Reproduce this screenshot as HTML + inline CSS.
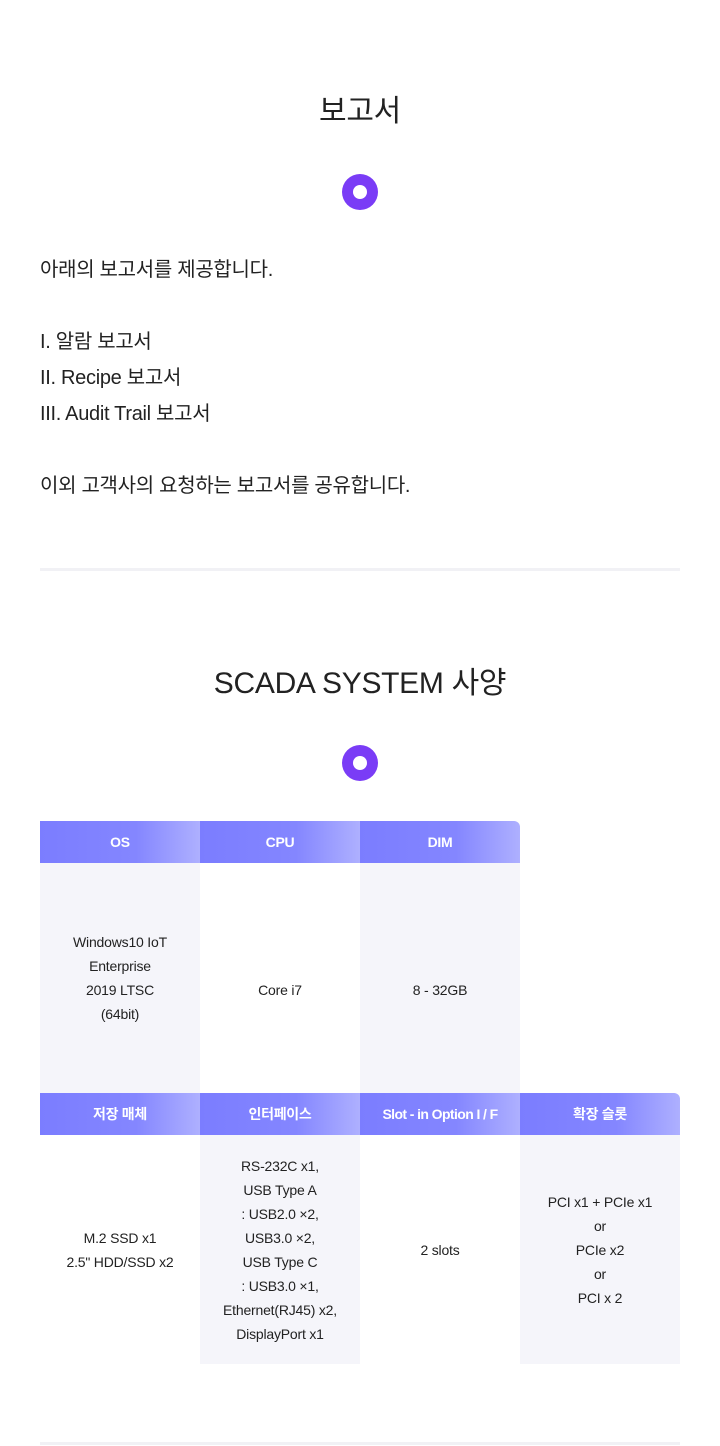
<!DOCTYPE html>
<html><head><meta charset="utf-8"><style>
*{margin:0;padding:0;box-sizing:border-box}
body{width:720px;height:1446px;background:#fff;font-family:"Liberation Sans","Noto Sans CJK KR",sans-serif;color:#222;position:relative;overflow:hidden}
.t{position:absolute;left:0;width:720px;text-align:center;font-size:30px;color:#222;letter-spacing:-0.3px}
.dot{position:absolute;left:342px;width:36px;height:36px;border-radius:50%;background:#7a3cf6}
.dot:after{content:"";position:absolute;left:11px;top:11px;width:14px;height:14px;border-radius:50%;background:#fff}
.p{position:absolute;left:40px;font-size:20px;line-height:36px;color:#222;letter-spacing:-0.3px}
.hr{position:absolute;left:40px;width:640px;height:3px;background:#f1f1f5}
.h,.c{position:absolute;width:160px;display:flex;align-items:center;justify-content:center;text-align:center}
.h{height:42px;color:#fff;font-size:14px;font-weight:bold;letter-spacing:-0.3px;background:linear-gradient(90deg,#7b7dff 0%,#8486ff 60%,#aeb0ff 100%)}
.c{font-size:14px;line-height:24px;color:#222;letter-spacing:-0.2px}
.g{background:#f5f5fa}
</style></head><body>
<div class="t" style="top:86px">보고서</div>
<div class="dot" style="top:174px"></div>
<div class="p" style="top:252px">아래의 보고서를 제공합니다.<br><br>I. 알람 보고서<br>II. Recipe 보고서<br>III. Audit Trail 보고서<br><br>이외 고객사의 요청하는 보고서를 공유합니다.</div>
<div class="hr" style="top:568px"></div>
<div class="t" style="top:658px">SCADA SYSTEM 사양</div>
<div class="dot" style="top:745px"></div>

<div class="h" style="left:40px;top:821px">OS</div>
<div class="h" style="left:200px;top:821px">CPU</div>
<div class="h" style="left:360px;top:821px;border-top-right-radius:6px">DIM</div>
<div class="c g" style="left:40px;top:863px;height:230px">Windows10 IoT<br>Enterprise<br>2019 LTSC<br>(64bit)</div>
<div class="c" style="left:200px;top:863px;height:230px;padding-top:24px">Core i7</div>
<div class="c g" style="left:360px;top:863px;height:230px;padding-top:24px">8 - 32GB</div>

<div class="h" style="left:40px;top:1093px">저장 매체</div>
<div class="h" style="left:200px;top:1093px">인터페이스</div>
<div class="h" style="left:360px;top:1093px;letter-spacing:-0.6px">Slot - in Option I / F</div>
<div class="h" style="left:520px;top:1093px;border-top-right-radius:6px">확장 슬롯</div>
<div class="c" style="left:40px;top:1135px;height:229px">M.2 SSD x1<br>2.5" HDD/SSD x2</div>
<div class="c g" style="left:200px;top:1135px;height:229px">RS-232C x1,<br>USB Type A<br>: USB2.0 ×2,<br>USB3.0 ×2,<br>USB Type C<br>: USB3.0 ×1,<br>Ethernet(RJ45) x2,<br>DisplayPort x1</div>
<div class="c" style="left:360px;top:1135px;height:229px">2 slots</div>
<div class="c g" style="left:520px;top:1135px;height:229px">PCI x1 + PCIe x1<br>or<br>PCIe x2<br>or<br>PCI x 2</div>
<div class="hr" style="top:1442px"></div>
</body></html>
